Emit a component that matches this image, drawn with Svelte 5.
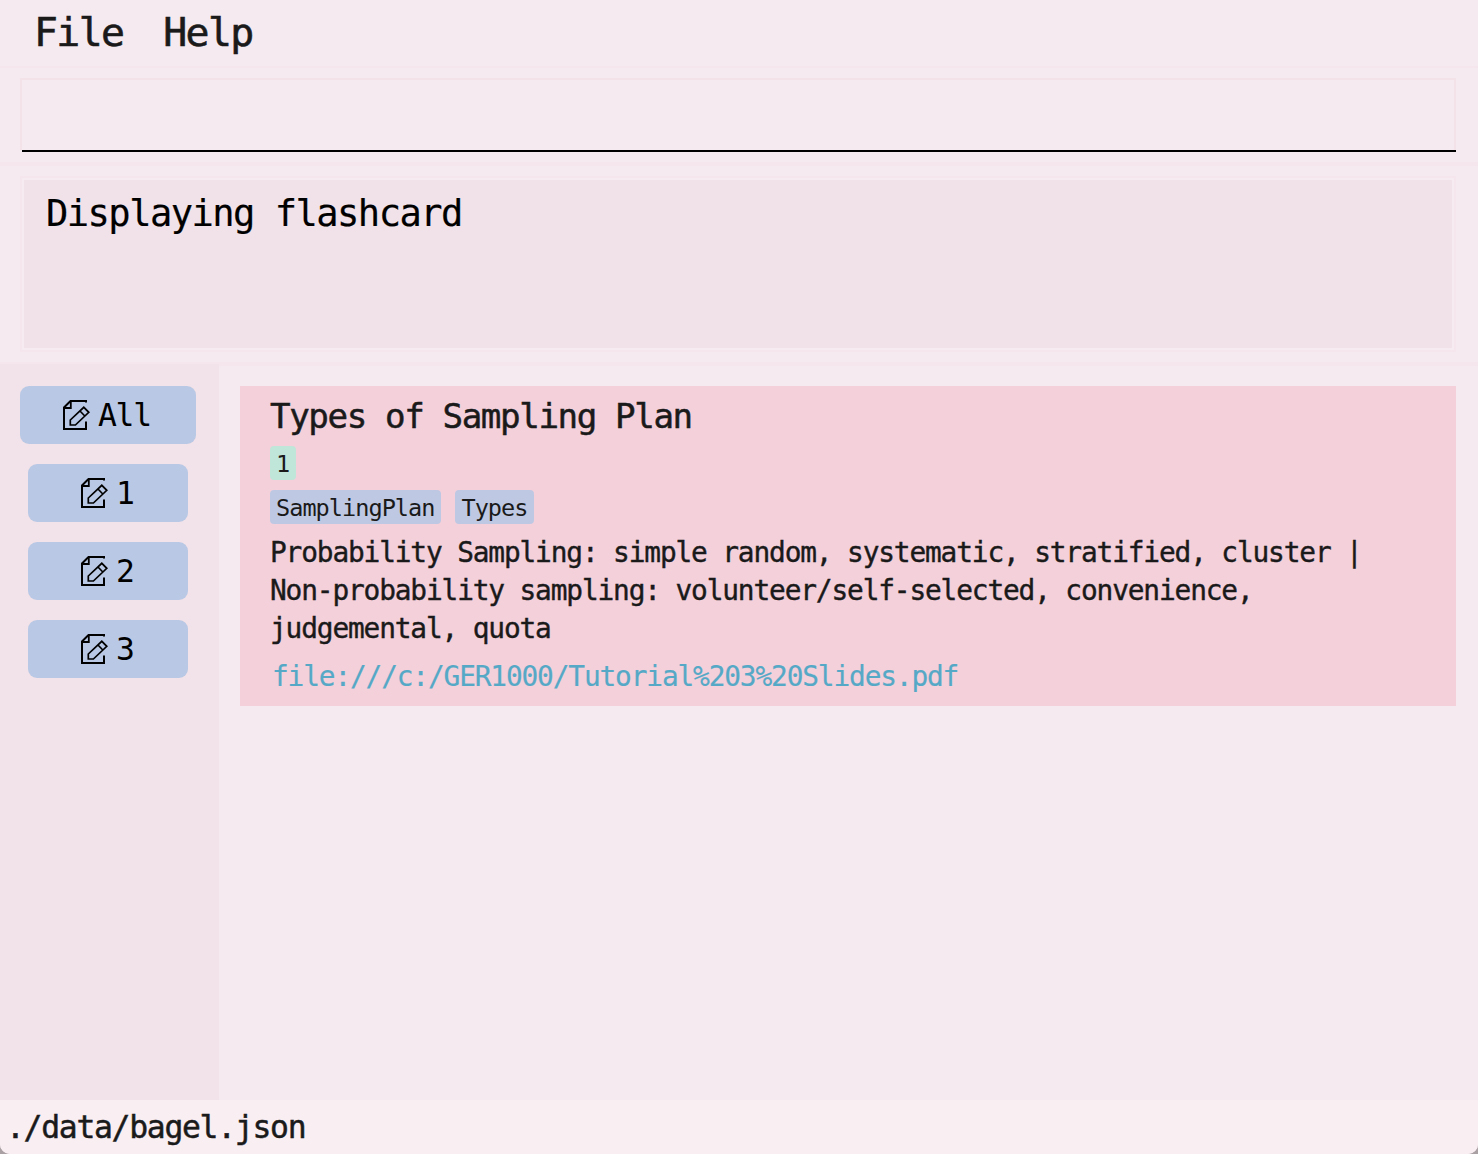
<script>
  const menus = ['File', 'Help'];
  const sets = ['All', '1', '2', '3'];
  const tags = ['SamplingPlan', 'Types'];
  const description = [
    'Probability Sampling: simple random, systematic, stratified, cluster |',
    'Non-probability sampling: volunteer/self-selected, convenience,',
    'judgemental, quota'
  ];
</script>

<div class="window">
  <nav class="menu">
    {#each menus as item}<span>{item}</span>{/each}
  </nav>
  <div class="command"><div class="field"></div><div class="underline"></div></div>
  <div class="result"><div class="message">Displaying flashcard</div></div>
  <main>
    <aside>
      {#each sets as name, i}
        <div class="set" class:all={i === 0}>
          <svg width="28" height="32" viewBox="0 0 28 32" fill="none" stroke="#000">
            <path d="M24 3.5V2H8.5L2 8.5V30H24V22.5" stroke-width="2" />
            <path d="M8.8 2V9H2" stroke-width="1.8" />
            <path d="M8.3 26V21L21.8 8.3L26.8 13.3L13.4 26Z M18 12L22.8 17" stroke-width="1.7" />
          </svg>
          <span>{name}</span>
        </div>
      {/each}
    </aside>
    <section>
      <article>
        <h1>Types of Sampling Plan</h1>
        <div class="row"><span class="tag count">1</span></div>
        <div class="row">{#each tags as tag}<span class="tag">{tag}</span>{/each}</div>
        <div class="description">{#each description as line}<div>{line}</div>{/each}</div>
        <div class="link">file:///c:/GER1000/Tutorial%203%20Slides.pdf</div>
      </article>
    </section>
  </main>
  <footer>./data/bagel.json</footer>
</div>

<style>
  :global(body) { background: #aaa1a5; }
  .window {
    width: 1478px;
    height: 1154px;
    box-sizing: border-box;
    display: flex;
    flex-direction: column;
    overflow: hidden;
    border-radius: 0 0 10px 10px;
    background: #f5eaf0;
    color: #1a1a1a;
    font-family: "DejaVu Sans Mono", monospace;
    white-space: nowrap;
  }
  .window * { box-sizing: border-box; letter-spacing: -0.0413em; }
  .menu {
    height: 68px;
    padding-left: 34px;
    display: flex;
    gap: 40px;
    border-bottom: 2px solid #f4e6ec;
    font-size: 39.8px;
    line-height: 65px;
    -webkit-text-stroke: 0.6px currentColor;
  }
  .command {
    height: 98px;
    padding: 10px 22px 10px 20px;
    border-bottom: 4px solid #f4e6ec;
  }
  .field {
    height: 72px;
    border: 2px solid #f3e3e9;
    border-bottom: 0;
  }
  .underline { height: 2px; margin-left: 2px; background: #000; }
  .result {
    height: 198px;
    padding: 10px 22px 10px 20px;
    border-bottom: 2px solid #f4e6ec;
  }
  .message {
    height: 176px;
    padding: 12px 24px;
    border: 2px solid #f4e6ec;
    box-shadow: inset 0 0 0 2px #f6ebf0;
    background: #f1e2e9;
    color: #000;
    font-size: 37.1px;
    line-height: 47px;
    -webkit-text-stroke: 0.2px currentColor;
  }
  main { height: 736px; display: flex; }
  aside {
    width: 219px;
    padding: 22px 0 0 20px;
    display: flex;
    flex-direction: column;
    gap: 20px;
    background: #f2e2e9;
  }
  .set {
    width: 160px;
    height: 58px;
    margin-left: 8px;
    padding-left: 52px;
    border-radius: 9px;
    display: flex;
    align-items: center;
    gap: 8px;
    background: #b9c8e4;
    color: #000;
    font-size: 31.4px;
    line-height: 60px;
  }
  .set svg { flex: none; }
  .all { width: 176px; margin-left: 0; padding-left: 42px; }
  section { flex: 1; padding: 20px 22px 0 21px; border-top: 2px solid #f4e6ec; }
  article {
    height: 320px;
    padding: 6px 30px 0;
    background: #f4d0db;
  }
  h1 {
    margin: 0;
    height: 54px;
    font-size: 34.2px;
    line-height: 48px;
    font-weight: 400;
    -webkit-text-stroke: 0.5px currentColor;
  }
  .row { height: 44px; display: flex; gap: 14px; }
  .tag {
    height: 34px;
    padding: 0 7px 0 6px;
    border-radius: 4px;
    background: #bec8e3;
    font-size: 23.55px;
    line-height: 37px;
  }
  .count { background: #c0e5d9; }
  .description {
    height: 114px;
    font-size: 27.82px;
    line-height: 38px;
    -webkit-text-stroke: 0.4px currentColor;
  }
  .link {
    padding-left: 2px;
    color: #56a9c6;
    font-size: 27.82px;
    line-height: 58px;
    -webkit-text-stroke: 0.2px currentColor;
  }
  footer {
    height: 54px;
    padding-left: 6px;
    background: #f9eef2;
    font-size: 31.4px;
    line-height: 55px;
    -webkit-text-stroke: 0.5px currentColor;
  }
</style>
